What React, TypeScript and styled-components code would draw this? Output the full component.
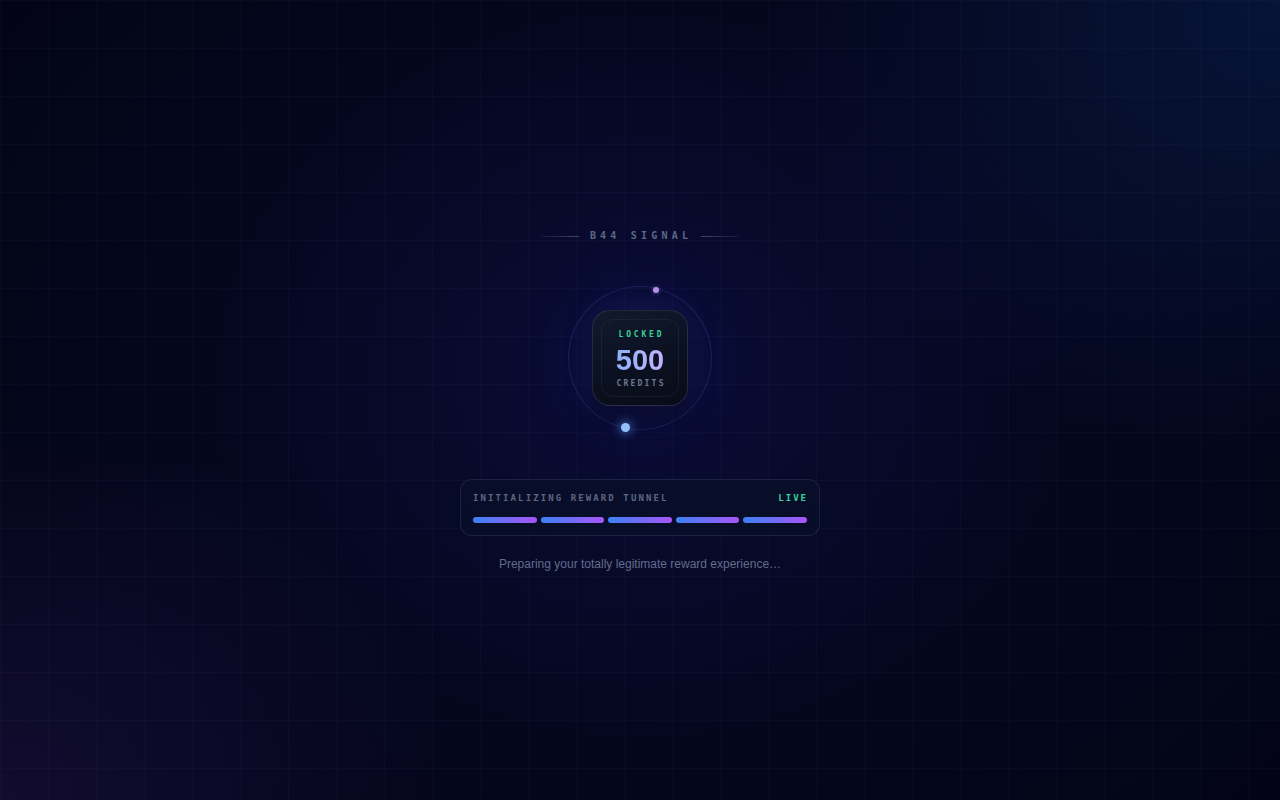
import styled, { createGlobalStyle } from "styled-components";

const GlobalStyle = createGlobalStyle`
  html, body {
    margin: 0;
    padding: 0;
    background: #020414;
  }
  * {
    box-sizing: border-box;
  }
`;

const App = () => {
  return (
    <>
      <GlobalStyle />
      <StyledPage>
        <StyledGrid />
        <StyledContent>
          <StyledSignal>
            <StyledRule $side="left" />
            <StyledSignalText>B44 SIGNAL</StyledSignalText>
            <StyledRule $side="right" />
          </StyledSignal>

          <StyledRing>
            <StyledDot $x={87} $y={3} $size={6} $color="#b592ea" />
            <StyledDot $x={56} $y={140} $size={9} $color="#93c0fb" $glow />
            <StyledCard>
              <StyledCardInner>
                <StyledLocked>LOCKED</StyledLocked>
                <StyledAmount>500</StyledAmount>
                <StyledCredits>CREDITS</StyledCredits>
              </StyledCardInner>
            </StyledCard>
          </StyledRing>

          <StyledPanel>
            <StyledPanelHeader>
              <StyledPanelTitle>INITIALIZING REWARD TUNNEL</StyledPanelTitle>
              <StyledLive>LIVE</StyledLive>
            </StyledPanelHeader>
            <StyledBars>
              {[0, 1, 2, 3, 4].map((i) => (
                <StyledBar key={i} />
              ))}
            </StyledBars>
          </StyledPanel>

          <StyledCaption>Preparing your totally legitimate reward experience…</StyledCaption>
        </StyledContent>
      </StyledPage>
    </>
  );
};

export default App;

const mono = `"DejaVu Sans Mono", "Liberation Mono", monospace`;

const StyledPage = styled.div`
  position: relative;
  min-height: 100vh;
  overflow: hidden;
  background:
    radial-gradient(ellipse 420px 380px at 50% 45%, rgba(20, 20, 90, 0.28), rgba(20, 20, 90, 0) 100%),
    radial-gradient(ellipse 520px 460px at 100% 0%, rgba(10, 36, 90, 0.5), rgba(10, 36, 90, 0) 100%),
    radial-gradient(ellipse 460px 380px at 0% 100%, rgba(34, 20, 72, 0.5), rgba(34, 20, 72, 0) 100%),
    radial-gradient(ellipse 900px 700px at 50% 50%, rgba(12, 14, 60, 0.5), rgba(12, 14, 60, 0) 100%),
    #020414;
`;

const StyledGrid = styled.div`
  position: absolute;
  inset: 0;
  pointer-events: none;
  background-image:
    linear-gradient(to right, rgba(120, 130, 200, 0.035) 1px, transparent 1px),
    linear-gradient(to bottom, rgba(120, 130, 200, 0.035) 1px, transparent 1px);
  background-size: 48px 48px;
`;

const StyledContent = styled.div`
  position: relative;
  min-height: 100vh;
  padding-top: 2px;
  display: flex;
  flex-direction: column;
  align-items: center;
  justify-content: center;
`;

const StyledSignal = styled.div`
  display: flex;
  align-items: center;
  gap: 11px;
  height: 12px;
`;

const StyledRule = styled.div<{ $side: "left" | "right" }>`
  width: 38px;
  height: 1px;
  background: linear-gradient(
    ${(p) => (p.$side === "left" ? "to left" : "to right")},
    rgba(110, 120, 160, 0.55),
    rgba(110, 120, 160, 0.1)
  );
`;

const StyledSignalText = styled.span`
  font-family: ${mono};
  font-size: 10px;
  line-height: 12px;
  font-weight: 700;
  letter-spacing: 4.2px;
  margin-right: -2px;
  color: #5d6886;
`;

const StyledRing = styled.div`
  position: relative;
  width: 144px;
  height: 144px;
  margin-top: 44px;
  border-radius: 50%;
  border: 1px solid rgba(120, 130, 210, 0.18);
  background: radial-gradient(circle at 50% 50%, rgba(50, 60, 170, 0.2), rgba(30, 36, 120, 0.1) 70%, rgba(30, 36, 120, 0.05));
  box-shadow: 0 0 60px rgba(40, 50, 170, 0.14);
  display: flex;
  align-items: center;
  justify-content: center;
`;

const StyledDot = styled.div<{ $x: number; $y: number; $size: number; $color: string; $glow?: boolean }>`
  position: absolute;
  left: ${(p) => p.$x - p.$size / 2}px;
  top: ${(p) => p.$y - p.$size / 2}px;
  width: ${(p) => p.$size}px;
  height: ${(p) => p.$size}px;
  border-radius: 50%;
  background: ${(p) => p.$color};
  box-shadow: ${(p) => (p.$glow ? `0 0 10px 2px rgba(96, 150, 250, 0.55)` : `0 0 4px rgba(180, 140, 240, 0.5)`)};
`;

const StyledCard = styled.div`
  width: 96px;
  height: 96px;
  padding: 8px;
  border-radius: 18px;
  border: 1px solid rgba(160, 175, 220, 0.16);
  background: linear-gradient(160deg, #111a2c 0%, #0b1020 60%, #080c18 100%);
  box-shadow: 0 8px 24px rgba(0, 0, 10, 0.55), 0 0 28px rgba(50, 60, 190, 0.25);
`;

const StyledCardInner = styled.div`
  width: 100%;
  height: 100%;
  padding-top: 3px;
  border-radius: 12px;
  border: 1px solid rgba(160, 175, 220, 0.08);
  display: flex;
  flex-direction: column;
  align-items: center;
  justify-content: center;
`;

const StyledLocked = styled.div`
  font-family: ${mono};
  font-size: 8px;
  line-height: 10px;
  font-weight: 700;
  letter-spacing: 2.8px;
  margin-right: -2.8px;
  color: #34d399;
`;

const StyledAmount = styled.div`
  margin-top: 6px;
  font-family: "Liberation Sans", Arial, sans-serif;
  font-size: 29px;
  line-height: 28px;
  font-weight: 700;
  background: linear-gradient(90deg, #8fb0fa 0%, #a8b4fb 50%, #c4b0fb 100%);
  -webkit-background-clip: text;
  background-clip: text;
  color: transparent;
`;

const StyledCredits = styled.div`
  margin-top: 5px;
  font-family: ${mono};
  font-size: 8px;
  line-height: 10px;
  font-weight: 700;
  letter-spacing: 2.2px;
  margin-right: -2.2px;
  color: #6f7892;
`;

const StyledPanel = styled.div`
  width: 360px;
  margin-top: 49px;
  padding: 13px 12px 12px;
  border-radius: 12px;
  border: 1px solid rgba(150, 165, 215, 0.14);
  background: rgba(10, 16, 38, 0.55);
`;

const StyledPanelHeader = styled.div`
  display: flex;
  align-items: center;
  justify-content: space-between;
  height: 10px;
`;

const StyledPanelTitle = styled.span`
  font-family: ${mono};
  font-size: 9px;
  line-height: 10px;
  font-weight: 700;
  letter-spacing: 2.1px;
  color: #5d6784;
`;

const StyledLive = styled.span`
  font-family: ${mono};
  font-size: 9px;
  line-height: 10px;
  font-weight: 700;
  letter-spacing: 2px;
  margin-right: -1px;
  color: #34d399;
`;

const StyledBars = styled.div`
  display: flex;
  gap: 4px;
  margin-top: 14px;
`;

const StyledBar = styled.div`
  flex: 1;
  height: 6px;
  border-radius: 3px;
  background: linear-gradient(90deg, #3b82f6, #a855f7);
`;

const StyledCaption = styled.div`
  margin-top: 20px;
  font-family: "Liberation Sans", Arial, sans-serif;
  font-size: 12px;
  line-height: 16px;
  color: #636c8a;
`;
